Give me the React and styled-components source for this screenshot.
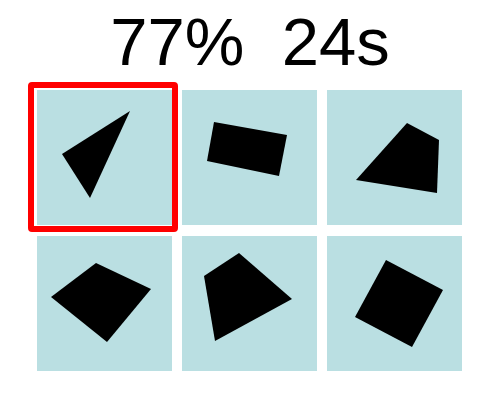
import React from 'react';
import styled, { createGlobalStyle } from 'styled-components';

const GlobalStyle = createGlobalStyle`
   body {
      margin: 0;
      background: white;
      font-family: "Liberation Sans", Arial, sans-serif;
   }
`

const Page = styled.div`
   display: flex;
   flex-direction: column;
   align-items: center;
   width: 500px;
   height: 400px;
   padding-top: 3px;
   box-sizing: border-box;
`

const Title = styled.h1`
   margin: 0 0 10px 0;
   font-size: 67px;
   font-weight: normal;
   line-height: 77px;
   color: black;
   white-space: pre;
`

const Grid = styled.div`
   display: grid;
   grid-template-columns: repeat(3, 135px);
   grid-auto-rows: 135px;
   column-gap: 10px;
   row-gap: 11px;
   margin-right: 1px;
`

const Cell = styled.div`
   position: relative;
   background: #badfe2;
`

const Shape = styled.svg`
   display: block;
   width: 135px;
   height: 135px;
`

const Selected = styled.div`
   position: absolute;
   left: -9px;
   top: -8px;
   width: 150px;
   height: 150px;
   box-sizing: border-box;
   border: 6px solid #ff0000;
   border-radius: 4px;
   pointer-events: none;
`

const shapes = [
   '93,21 25,64 53,108',
   '32,32 105,45 97,86 25,71',
   '80,33 112,50 110,103 29,90',
   '59,27 114,53 70,106 14,61',
   '57,17 110,63 33,105 22,40',
   '59,24 116,54 85,111 28,81',
]

const App = () => {
   const selected = 0

   return (
      <Page>
         <GlobalStyle />
         <Title>{'77%  24s'}</Title>
         <Grid>
            {shapes.map((points, i) => (
               <Cell key={i}>
                  <Shape viewBox="0 0 135 135">
                     <polygon points={points} fill="black" />
                  </Shape>
                  {i === selected && <Selected />}
               </Cell>
            ))}
         </Grid>
      </Page>
   )
}

export default App;
